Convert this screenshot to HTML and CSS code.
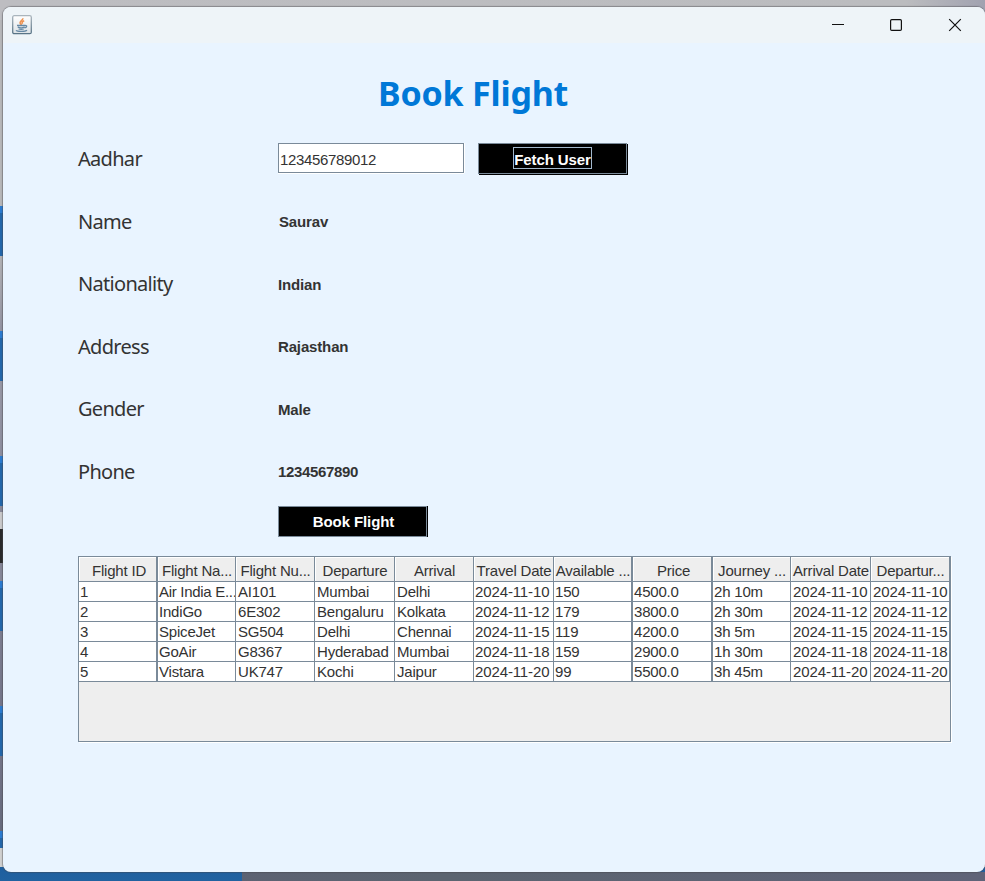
FILE: index.html
```html
<!DOCTYPE html>
<html lang="en">
<head>
<meta charset="utf-8">
<title>Book Flight</title>
<link rel="stylesheet" href="styles.css">
</head>
<body>
<div class="desktop">
<main class="window">
  <header class="titlebar">
    <svg class="app-icon" width="20" height="20" viewBox="0 0 20 20">
      <defs><linearGradient id="tile" x2="0" y2="1"><stop stop-color="#fff"/><stop offset="1" stop-color="#dce2e6"/></linearGradient><linearGradient id="edge" x2="0" y2="1"><stop stop-color="#aab5bd"/><stop offset="1" stop-color="#587386"/></linearGradient></defs>
      <rect x=".7" y=".7" width="18.6" height="18" rx="1.5" fill="url(#tile)" stroke="url(#edge)" stroke-width="1.3"/>
      <path d="M10.8 3.2c.5 2-3.8 3-2.6 5.1.4.7 1 1.1 1.2 1.7M12.2 5.8c-2 .8-2.7 1.8-1.6 3" fill="none" stroke="#ee914f" stroke-width="1.6"/>
      <path d="M5 10.5h8M5.8 12.2q3.2 1.2 6.8 0M6.6 14q2.6.8 5.2 0M13 10.6c2.6-.6 2 2.1-.5 2.3M4 15.4c1.2 1.4 9.4 1.4 11-.2" fill="none" stroke="#6689a5" stroke-width="1.3"/>
    </svg>
    <svg class="controls" width="132" height="20" viewBox="0 0 132 20" fill="none" stroke="#111" stroke-width="1.2">
      <path d="M0 9.5h12"/><rect x="58.6" y="4.6" width="10.8" height="10.8" rx="1.2"/><path d="m117.2 4.2 11.6 11.6m0-11.6-11.6 11.6"/>
    </svg>
  </header>
  <section class="content">
    <h1>Book Flight</h1>
    <form class="form">
      <label>Aadhar</label><input value="123456789012"><button type="button" class="fetch"><span>Fetch User</span></button>
      <label>Name</label><b class="name">Saurav</b>
      <label>Nationality</label><b class="low">Indian</b>
      <label>Address</label><b>Rajasthan</b>
      <label>Gender</label><b class="low">Male</b>
      <label>Phone</label><b class="phone">1234567890</b>
    </form>
    <button type="button" class="book">Book Flight</button>
    <div class="table-pane">
      <table>
        <colgroup><col class="w79"><col class="w78"><col class="w79"><col class="w80"><col class="w79"><col class="w80"><col class="w79"><col class="w80"><col class="w78"><col class="w80"><col class="w79"></colgroup>
        <thead><tr><th>Flight ID</th><th>Flight Na...</th><th>Flight Nu...</th><th>Departure</th><th>Arrival</th><th>Travel Date</th><th>Available ...</th><th>Price</th><th>Journey ...</th><th>Arrival Date</th><th>Departur...</th></tr></thead>
        <tbody>
        <tr><td>1</td><td class="tight">Air India E...</td><td>AI101</td><td>Mumbai</td><td>Delhi</td><td>2024-11-10</td><td>150</td><td>4500.0</td><td>2h 10m</td><td>2024-11-10</td><td>2024-11-10</td></tr>
        <tr><td>2</td><td>IndiGo</td><td>6E302</td><td>Bengaluru</td><td>Kolkata</td><td>2024-11-12</td><td>179</td><td>3800.0</td><td>2h 30m</td><td>2024-11-12</td><td>2024-11-12</td></tr>
        <tr><td>3</td><td>SpiceJet</td><td>SG504</td><td>Delhi</td><td>Chennai</td><td>2024-11-15</td><td>119</td><td>4200.0</td><td>3h 5m</td><td>2024-11-15</td><td>2024-11-15</td></tr>
        <tr><td>4</td><td>GoAir</td><td>G8367</td><td>Hyderabad</td><td>Mumbai</td><td>2024-11-18</td><td>159</td><td>2900.0</td><td>1h 30m</td><td>2024-11-18</td><td>2024-11-18</td></tr>
        <tr><td>5</td><td>Vistara</td><td>UK747</td><td>Kochi</td><td>Jaipur</td><td>2024-11-20</td><td>99</td><td>5500.0</td><td>3h 45m</td><td>2024-11-20</td><td>2024-11-20</td></tr>
        </tbody>
      </table>
    </div>
  </section>
</main>
</div>
</body>
</html>
```
FILE: styles.css
```css
* { box-sizing: border-box; }
body { margin: 0; font-family: "Liberation Sans", sans-serif; color: #333; }
.desktop {
  height: 881px; padding: 7px 0 9px 3px; overflow: hidden;
  background:
    linear-gradient(#1f5f9f, #2162a0) 0 867px / 242px 14px no-repeat,
    linear-gradient(90deg, #5e6075, #5b6470 45%, #5f6378) 0 872px / 985px 9px no-repeat,
    linear-gradient(90deg, #bdbdc1, #bbbcbf 92%, #a1a2b0) 0 0 / 985px 20px no-repeat,
    linear-gradient(#b7b7b9 206px, #2a7bd1 206px 213px, #2367ab 213px 256px, #b2b2b5 256px, #9292a1 331px, #2a7bd1 331px 338px, #2367ab 338px 381px, #9797a5 381px, #8c8d9e 456px, #2a7bd1 456px 463px, #2367ab 463px 506px, #88899a 506px 512px, #c9c9cb 512px 529px, #29292b 529px 563px, #858698 563px 581px, #2a7bd1 581px 588px, #2367ab 588px 631px, #7c7d90 631px, #747589 706px, #2a7bd1 706px 713px, #2367ab 713px 756px, #737488 756px, #666a7d 831px, #2a7bd1 831px 838px, #2367ab 838px 848px, #d0d0d0 848px 867px, #2060a0 867px);
}
.window { height: 865px; border-radius: 8px; overflow: hidden; background: #e9f4ff; box-shadow: 0 0 1px 1px rgba(70, 70, 75, .45); }
.titlebar { height: 36px; background: #eef4f8; display: flex; justify-content: space-between; padding: 8px 21px 0 9px; }
.content { padding: 0 34px 0 75px; }
h1 { margin: 0 0 0 300px; height: 100px; padding-top: 25px; font: bold 34px/50px "Noto Sans", "Open Sans", sans-serif; color: #0078d7; letter-spacing: -.2px; white-space: nowrap; }
.form { display: grid; grid-template-columns: 200px 186px 150px; grid-template-rows: 32px; grid-auto-rows: 32px; row-gap: 30.6px; align-items: center; }
label { grid-column: 1; font: 20px/32px "Noto Sans", sans-serif; letter-spacing: -.7px; }
b { font-size: 15px; line-height: 32px; letter-spacing: -.15px; }
.name { padding-left: 1px; }
.low { padding-top: 2px; }
.phone { letter-spacing: -.35px; }
input { width: 186px; height: 30px; margin: 0 0 2px; padding: 2px 1px 0; border: 1px solid #7a8a99; outline: 0; font: 15px "Liberation Sans", sans-serif; color: #333; background: #fff; box-shadow: 0 1px #fff, 1px 0 #fff; letter-spacing: -.35px; }
button { width: 150px; height: 32px; padding: 0; border: 1px solid #7a8a99; background: #000; color: #fff; font: bold 15px "Liberation Sans", sans-serif; outline: 0; }
.fetch { width: 149px; height: 31px; margin: 0 0 1px 14px; padding-bottom: 2px; box-shadow: 1px 1px #000; }
.fetch span { display: inline-block; height: 22px; line-height: 23px; border: 1px solid #a3b8cc; letter-spacing: -.1px; }
.book { display: block; width: 149px; height: 31px; margin: 18px 0 0 200px; padding: 0 0 0 2px; box-shadow: 1px 0 #000; letter-spacing: -.1px; }
.table-pane { width: 873px; height: 186px; margin-top: 19px; border: 1px solid #7a8a99; background: #eee; box-shadow: 1px 1px #fff; }
table { width: 871px; table-layout: fixed; border-spacing: 0; font-size: 15px; letter-spacing: -.2px; }
.w78 { width: 78px; } .w79 { width: 79px; } .w80 { width: 80px; }
th, td { border: solid #7a8a99; border-width: 0 1px 1px 0; white-space: nowrap; overflow: hidden; }
th { height: 25px; padding: 3px 0 0 1px; font-weight: normal; background: #eee; box-shadow: inset 1px 1px #fff; line-height: 21px; text-align: center; }
td { height: 20px; padding: 0 0 0 1px; line-height: 19px; background: #fff; }
.tight { letter-spacing: -.3px; }
th:nth-child(1), td:nth-child(1), th:nth-child(7), td:nth-child(7), th:nth-child(8), td:nth-child(8) { border-right-width: 2px; }
th:nth-child(1), th:nth-child(8) { padding-left: 3px; }
td:nth-child(3), td:nth-child(4), td:nth-child(5), td:nth-child(10), td:nth-child(11) { padding-left: 2px; }
td:nth-child(6), td:nth-child(10), td:nth-child(11) { letter-spacing: -.12px; }
```
